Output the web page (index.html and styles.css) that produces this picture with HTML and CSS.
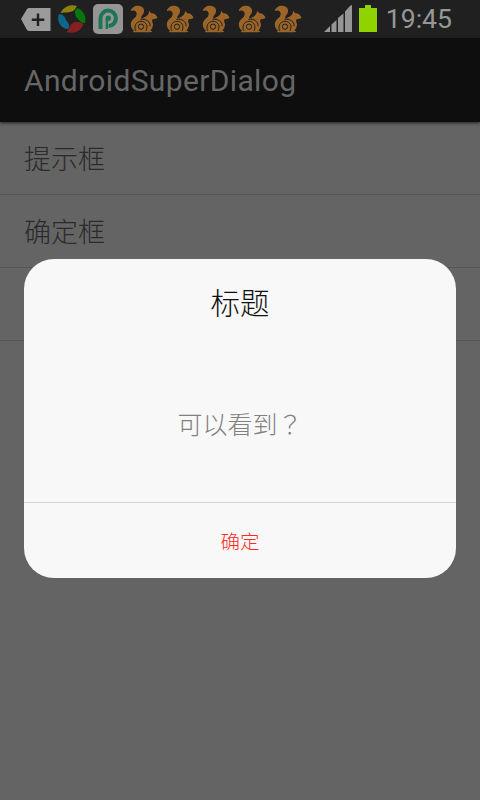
FILE: index.html
```html
<!DOCTYPE html>
<html lang="zh-CN">
<head>
    <meta charset="UTF-8">
    <meta name="viewport" content="width=device-width, initial-scale=1.0">
    <title>AndroidSuperDialog</title>
    <link rel="stylesheet" href="styles.css">
</head>
<body>
    <svg class="sprite" aria-hidden="true">
        <symbol id="squirrel" viewBox="0 0 84 84">
            <path d="M2 18C5 7 15 1 26 2C37 3 44 11 42 21C40 29 33 33 33 40C52 38 68 46 69 58C69 66 65 72 61 77L67 79L63 82H8L12 77C4 70 1 62 3 53C6 42 20 38 20 27C20 17 12 14 2 18Z"/>
            <path d="M57 17L64 25C72 24 79 30 83 39C77 42 72 42 68 43C66 47 67 51 66 54C60 46 50 41 38 39C50 34 57 29 57 17Z"/>
            <g fill="none" stroke="#202020" stroke-width="3">
                <path d="M18 78C10 65 18 49 33 49C48 49 55 63 48 78"/>
                <path d="M31 43C47 41 62 49 60 64"/>
                <circle cx="33" cy="65" r="8"/>
            </g>
        </symbol>
    </svg>

    <div class="status-bar">
        <div class="notifications">
            <svg class="icon" viewBox="0 0 30 30">
                <path fill="#9b9b9b" d="M0 15L6 5Q7 4 8 4H29.500V27H8Q7 27 6 26Z"/>
                <path stroke="#202020" stroke-width="2.400" d="M17 9.500V22M10.800 15.800H23.300"/>
            </svg>
            <svg class="icon" viewBox="0 0 30 30">
                <path fill="#8c8010" d="M3.500 9C7 2 14 0 20 2L17.500 6C14 9 9 8 3.500 9Z"/>
                <path fill="#08760f" d="M20.500 4C26 6 30 13 28 19C25 19 22 17 20 14C17 10 17.500 6 20.500 4Z"/>
                <path fill="#852022" d="M26.500 20C24 27 17 30.500 9.500 28C13 25 13 18 19 18C22 18 24 18 26.500 20Z"/>
                <path fill="#0d668c" d="M2 10C6 10 8 13 9 16C11 19 14 21 11 25C4 25 -1 17 2 10Z"/>
            </svg>
            <svg class="icon" viewBox="0 0 30 30">
                <rect width="30" height="30" rx="5" fill="#959595"/>
                <path fill="none" stroke="#1c7654" stroke-width="4" d="M7.500 25V14.500A7.700 7.700 0 1 1 15.500 22"/>
                <path fill="none" stroke="#1c7654" stroke-width="2.400" d="M13.800 25V14.500"/>
                <circle cx="15.300" cy="14.300" r="2.700" fill="#1c7654"/>
            </svg>
            <svg class="squirrel"><use href="#squirrel"/></svg>
            <svg class="squirrel"><use href="#squirrel"/></svg>
            <svg class="squirrel"><use href="#squirrel"/></svg>
            <svg class="squirrel"><use href="#squirrel"/></svg>
            <svg class="squirrel"><use href="#squirrel"/></svg>
        </div>
        <div class="system">
            <svg class="signal" viewBox="0 0 28 27" fill="#969696">
                <path d="M0 27L6 21V27ZM7.500 19.500L12.500 15V27H7.500ZM14 13L19.500 8.500V27H14ZM21 6.500L26 1L28 0V27H21Z"/>
            </svg>
            <svg class="battery" viewBox="0 0 18 27" fill="#8fd300">
                <path d="M6 0H12V3H18V27H0V3H6Z"/>
            </svg>
            <span class="clock">19:45</span>
        </div>
    </div>

    <div class="action-bar">
        <h1>AndroidSuperDialog</h1>
    </div>

    <ul class="list">
        <li>提示框</li>
        <li>确定框</li>
        <li></li>
    </ul>

    <div class="dialog" role="dialog">
        <h2 class="dialog-title">标题</h2>
        <p class="dialog-message">可以看到<span class="mark" lang="zh-TW">？</span></p>
        <button class="dialog-button" type="button">确定</button>
    </div>
</body>
</html>
```
FILE: styles.css
```css
* {
    box-sizing: border-box;
}
body {
    margin: 0;
    height: 800px;
    overflow: hidden;
    background-color: #646464;
    font-family: Roboto, "Noto Sans CJK SC", sans-serif;
}
.sprite {
    position: absolute;
    width: 0;
    height: 0;
}
.status-bar {
    display: flex;
    justify-content: space-between;
    height: 38px;
    padding: 0 28px 0 21px;
    background-color: #202020;
}
.notifications {
    display: flex;
    align-items: center;
    gap: 6px;
}
.icon {
    width: 30px;
    height: 30px;
}
.squirrel {
    width: 28px;
    height: 28px;
    margin: 0 1px;
    fill: #9b6528;
}
.system {
    display: flex;
    align-items: flex-start;
    padding-top: 5px;
}
.signal {
    width: 28px;
    height: 27px;
    margin-right: 7px;
}
.battery {
    width: 18px;
    height: 27px;
    margin-right: 9px;
}
.clock {
    font-size: 26.6px;
    line-height: 28px;
    color: #979797;
}
.action-bar {
    height: 84px;
    padding-left: 24px;
    background-color: #0e0e0e;
    box-shadow: 0 1px 3px rgba(0, 0, 0, 0.7);
}
.action-bar h1 {
    margin: 0;
    font-size: 30px;
    font-weight: 400;
    line-height: 85px;
    letter-spacing: 0.35px;
    color: #666;
}
.list {
    margin: 0;
    padding: 0;
    list-style: none;
}
.list li {
    height: 73px;
    padding-left: 24px;
    border-bottom: 1px solid #565656;
    font-size: 27px;
    font-weight: 300;
    line-height: 76px;
    color: #2a2a2a;
}
.dialog {
    position: absolute;
    top: 259px;
    left: 24px;
    display: flex;
    flex-direction: column;
    width: 432px;
    height: 319px;
    border-radius: 30px;
    background-color: #f8f8f8;
    text-align: center;
    overflow: hidden;
}
.dialog-title {
    margin: 0;
    font-size: 29.5px;
    font-weight: 300;
    line-height: 90px;
    color: #111;
}
.dialog-message {
    flex: 1;
    margin: 0;
    font-size: 25px;
    font-weight: 300;
    line-height: 149px;
    color: #808080;
}
.mark {
    font-family: "Noto Sans CJK TC", sans-serif;
}
.dialog-button {
    flex-shrink: 0;
    height: 76px;
    padding: 0;
    border: 0;
    border-top: 1px solid #d4d4d4;
    background: none;
    font-family: inherit;
    font-size: 19.5px;
    font-weight: 300;
    color: #ff2d20;
}
```
